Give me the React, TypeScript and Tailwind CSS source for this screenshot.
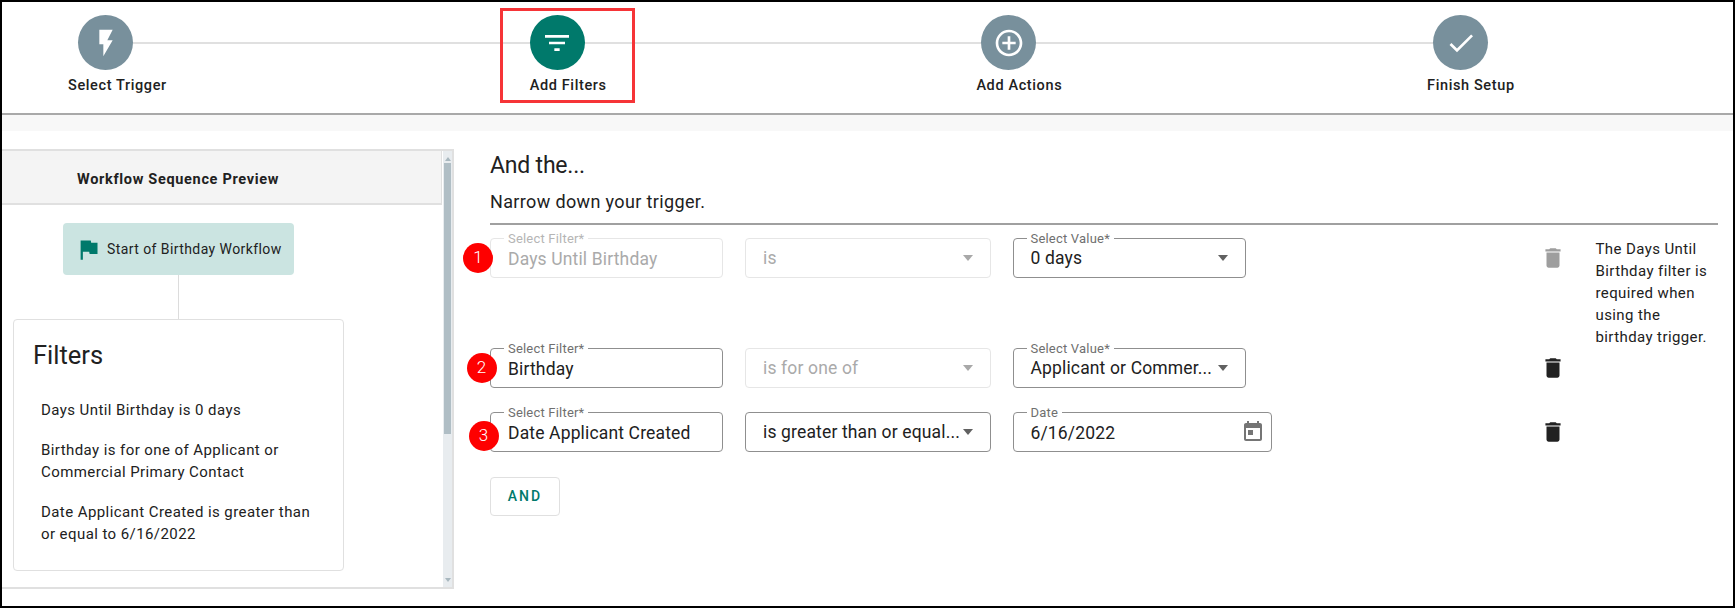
import { ReactNode } from "react";

const PATHS = {
  bolt: "M7 2v11h3v9l7-12h-4l4-8z",
  filter: "M10 18h4v-2h-4v2zM3 6v2h18V6H3zm3 7h12v-2H6v2z",
  add: "M13 7h-2v4H7v2h4v4h2v-4h4v-2h-4V7zm-1-5C6.48 2 2 6.48 2 12s4.48 10 10 10 10-4.48 10-10S17.52 2 12 2zm0 18c-4.41 0-8-3.59-8-8s3.59-8 8-8 8 3.59 8 8-3.59 8-8 8z",
  check: "M9 16.17L4.83 12l-1.42 1.41L9 19 21 7l-1.41-1.41z",
  flag: "M14.4 6L14 4H5v17h2v-7h5.6l.4 2h7V6z",
  trash: "M6 19c0 1.1.9 2 2 2h8c1.1 0 2-.9 2-2V7H6v12zM19 4h-3.5l-1-1h-5l-1 1H5v2h14V4z",
  today: "M19 3h-1V1h-2v2H8V1H6v2H5c-1.11 0-1.99.9-1.99 2L3 19c0 1.1.89 2 2 2h14c1.1 0 2-.9 2-2V5c0-1.1-.9-2-2-2zm0 16H5V8h14v11zM7 10h5v5H7z",
};

function Icon({ d, className }: { d: string; className: string }) {
  return (
    <svg viewBox="0 0 24 24" fill="currentColor" className={className}>
      <path d={d} />
    </svg>
  );
}

const steps = [
  { label: "Select Trigger", icon: PATHS.bolt, labelClass: "-ml-[10px]" },
  { label: "Add Filters", icon: PATHS.filter, labelClass: "ml-0", active: true },
  { label: "Add Actions", icon: PATHS.add, labelClass: "-ml-[5px]" },
  { label: "Finish Setup", icon: PATHS.check, labelClass: "-ml-[6px]", last: true },
];

function Step({ label, icon, labelClass, active, last }: (typeof steps)[number]) {
  return (
    <div className={last ? "flex flex-col" : "flex flex-col w-[451.7px]"}>
      <div className="flex items-center">
        <div
          className={`w-[55px] h-[55px] rounded-full flex items-center justify-center text-white shrink-0 ${
            active ? "bg-[#00796b]" : "bg-[#78909c]"
          }`}
        >
          <Icon d={icon} className="w-[32px] h-[32px]" />
        </div>
        {!last && <div className="flex-1 h-[2px] bg-[#e0e0e0]" />}
      </div>
      <div className={`mt-[7px] text-[14.5px] leading-[18px] font-medium tracking-[0.62px] text-[#212121] ${labelClass}`}>
        {label}
      </div>
    </div>
  );
}

function Field({
  label,
  value,
  disabled,
  width,
  caret,
  icon,
  valueDim,
  height = "h-[40px]",
}: {
  label?: string;
  value: string;
  disabled?: boolean;
  width: string;
  caret?: boolean;
  icon?: ReactNode;
  valueDim?: boolean;
  height?: string;
}) {
  return (
    <div
      className={`relative ${width} ${height} rounded-[4px] border flex items-center pl-[17px] ${
        disabled ? "border-[#e6e6e6]" : "border-[#8f8f8f]"
      }`}
    >
      {label && (
        <span
          className={`absolute left-[13px] -top-[7px] bg-white px-[4px] text-[13px] leading-[14px] tracking-[0.2px] ${
            valueDim ? "text-[#b5b5b5]" : "text-[#6f6f6f]"
          }`}
        >
          {label}
        </span>
      )}
      <span
        className={`text-[17.5px] leading-[20px] whitespace-nowrap tracking-[0.15px] ${
          label && height === "h-[40px]" ? "mt-[2px]" : ""
        } ${valueDim ? "text-[#aaaaaa]" : "text-[#212121]"}`}
      >
        {value}
      </span>
      {caret && (
        <span
          className={`absolute right-[17px] top-1/2 -mt-[3px] w-0 h-0 border-x-[5px] border-x-transparent border-t-[6px] ${
            disabled ? "border-t-[#a8a8a8]" : "border-t-[#616161]"
          }`}
        />
      )}
      {icon}
    </div>
  );
}

function Trash({ className }: { className: string }) {
  return (
    <div className="w-[50px] h-[40px] flex items-center">
      <Icon d={PATHS.trash} className={`w-[26px] h-[26px] -ml-[6px] ${className}`} />
    </div>
  );
}

function Badge({ n, className }: { n: number; className: string }) {
  return (
    <span
      className={`absolute w-[30px] h-[30px] rounded-full bg-[#fe0000] text-white text-[17px] font-light flex items-center justify-center ${className}`}
    >
      {n}
    </span>
  );
}

export default function App() {
  return (
    <div className="relative w-[1735px] h-[608px] overflow-hidden border-2 border-black bg-white font-['Roboto',sans-serif] text-[#212121]">
      {/* stepper */}
      <div className="h-[113px] border-b-2 border-[#a9a9a9] pl-[76px] pt-[13px] flex">
        {steps.map((s) => (
          <Step key={s.label} {...s} />
        ))}
      </div>
      <div className="h-[16px] bg-[#f8f8f8]" />

      <div className="flex">
        {/* sequence preview */}
        <div className="mt-[18px] w-[452px] h-[440px] shrink-0 flex border-t-2 border-r-2 border-b-2 border-[#e0e0e0]">
          <div className="w-[441px] flex flex-col">
            <div className="h-[54px] shrink-0 bg-[#f4f4f4] border-b-2 border-r border-[#e0e0e0] flex items-center pl-[75px] pt-[5px] text-[14.5px] font-bold tracking-[0.68px]">
              Workflow Sequence Preview
            </div>
            <div className="flex-1 flex flex-col pl-[11px]">
              <div className="w-[331px] flex flex-col items-center">
                <div className="mt-[18px] w-[231px] h-[52px] rounded-[4px] bg-[#cbe4e1] flex items-center pl-[12px] gap-[5px] text-[14px] tracking-[0.42px]">
                  <Icon d={PATHS.flag} className="w-[27px] h-[27px] text-[#00796b]" />
                  Start of Birthday Workflow
                </div>
                <div className="w-px h-[44px] bg-[#dcdcdc]" />
                <div className="w-[331px] h-[252px] rounded-[4px] border border-[#e0e0e0] pl-[19px] pr-[24px] pt-[18px]">
                  <div className="text-[25.5px] leading-[34px]">Filters</div>
                  <div className="mt-[27px] pl-[8px] text-[15px] leading-[22px] tracking-[0.42px] flex flex-col gap-[18px]">
                    <p>Days Until Birthday is 0 days</p>
                    <p>Birthday is for one of Applicant or Commercial Primary Contact</p>
                    <p>Date Applicant Created is greater than or equal to 6/16/2022</p>
                  </div>
                </div>
                <div className="w-px flex-1 bg-[#dcdcdc]" />
              </div>
            </div>
          </div>
          {/* scrollbar */}
          <div className="relative w-[9px] bg-[#e8ecef] ml-[1px] flex flex-col items-center">
            <span className="mt-[6px] w-0 h-0 border-x-[3.5px] border-x-transparent border-b-[4px] border-b-[#a9b8bf]" />
            <div className="mt-[2px] w-[7px] h-[271px] bg-[#b0bec5]" />
            <span className="mt-auto mb-[5px] w-0 h-0 border-x-[3.5px] border-x-transparent border-t-[4px] border-t-[#a9b8bf]" />
          </div>
        </div>

        {/* filter form */}
        <div className="relative pl-[36px] pt-[18px] flex-1">
          <h2 className="text-[23px] leading-[34px] tracking-[-0.2px]">And the...</h2>
          <p className="mt-[7px] text-[18px] leading-[24px] tracking-[0.36px]">Narrow down your trigger.</p>
          <div className="mt-[9px] w-[1228px] h-[2px] bg-[#a0a0a0]" />

          <div className="mt-[13px] flex h-[110px] items-start">
            <Field label="Select Filter*" value="Days Until Birthday" disabled valueDim width="w-[233px]" />
            <Field value="is" disabled valueDim caret width="w-[246px] ml-[22px]" height="h-[39.5px]" />
            <div className="w-[533px] ml-[21.5px] shrink-0">
              <Field label="Select Value*" value="0 days" caret width="w-[233px]" height="h-[39.5px]" />
            </div>
            <Trash className="text-[#9e9e9e]" />
            <p className="w-[118px] text-[15px] leading-[22px] tracking-[0.4px]">
              The Days Until Birthday filter is required when using the birthday trigger.
            </p>
          </div>

          <div className="flex h-[64px] items-start">
            <Field label="Select Filter*" value="Birthday" width="w-[233px]" />
            <Field value="is for one of" disabled valueDim caret width="w-[246px] ml-[22px]" height="h-[39.5px]" />
            <div className="w-[533px] ml-[21.5px] shrink-0">
              <Field label="Select Value*" value="Applicant or Commer..." caret width="w-[233px]" height="h-[39.5px]" />
            </div>
            <Trash className="text-[#212121]" />
          </div>

          <div className="flex items-start">
            <Field label="Select Filter*" value="Date Applicant Created" width="w-[233px]" />
            <Field value="is greater than or equal..." caret width="w-[246px] ml-[22px]" height="h-[39.5px]" />
            <div className="w-[533px] ml-[21.5px] shrink-0">
              <Field
                label="Date"
                value="6/16/2022"
                width="w-[259px]"
                icon={<Icon d={PATHS.today} className="absolute right-[6px] top-[7px] w-[24px] h-[24px] text-[#757575]" />}
              />
            </div>
            <Trash className="text-[#212121]" />
          </div>

          <button className="mt-[25px] w-[70px] h-[39px] rounded-[4px] border border-[#e0e0e0] text-[#00796b] text-[14px] font-medium tracking-[2px]">
            AND
          </button>
        </div>
      </div>

      {/* annotations laid over the screenshot */}
      <div className="absolute left-[498px] top-[6px] w-[135px] h-[95px] border-[3px] border-[#f63437]" />
      <Badge n={1} className="left-[461px] top-[241px]" />
      <Badge n={2} className="left-[464.5px] top-[351px]" />
      <Badge n={3} className="left-[466.5px] top-[419px]" />
    </div>
  );
}
